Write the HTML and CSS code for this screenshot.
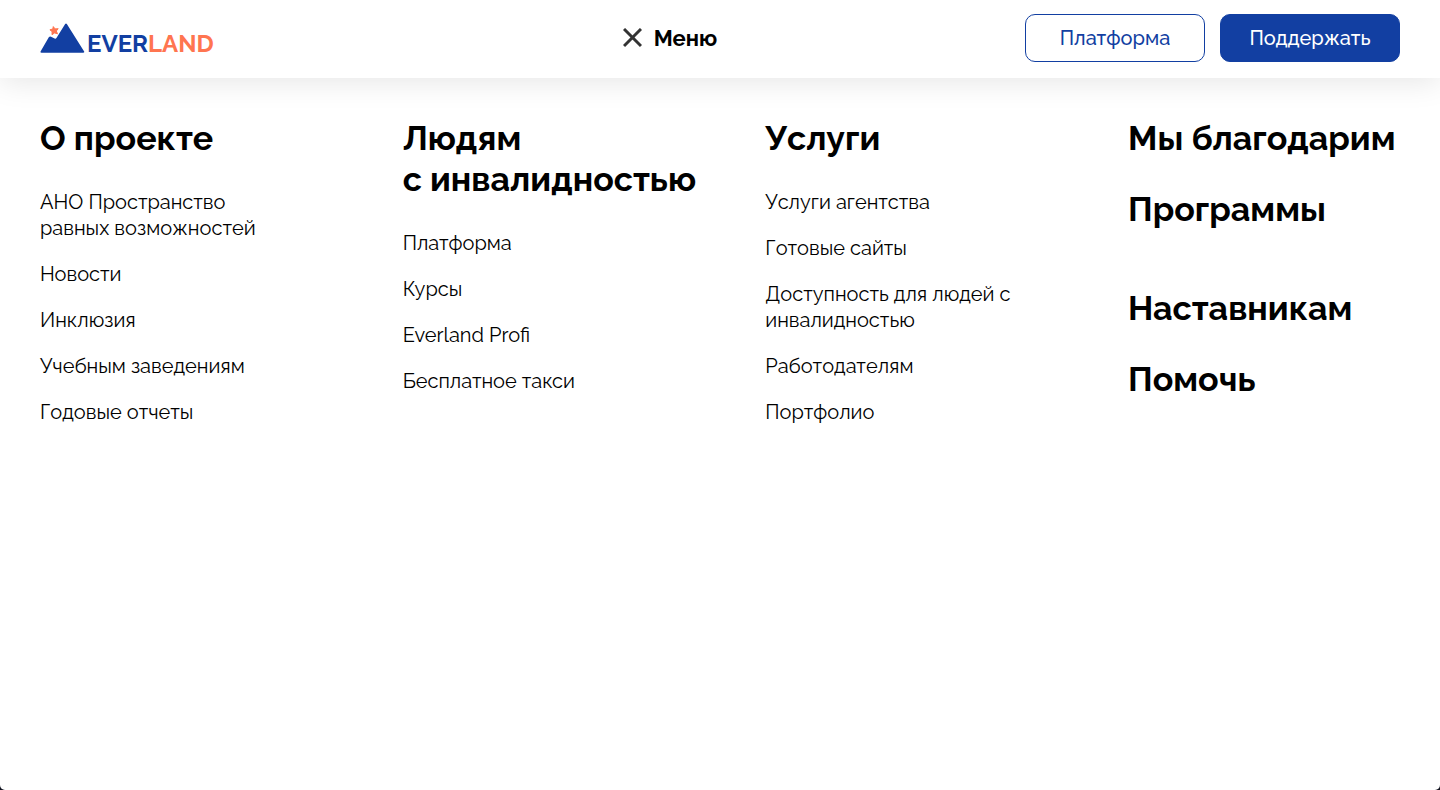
FILE: index.html
```html
<!DOCTYPE html>
<html lang="ru">
<head>
<meta charset="utf-8">
<meta name="viewport" content="width=device-width, initial-scale=1">
<title>Everland</title>
<link rel="stylesheet" href="styles.css">
</head>
<body>
<header class="header">
  <a class="logo" href="#">
    <svg class="logo-mark" width="45" height="30" viewBox="0 0 45 30" aria-hidden="true">
      <path fill="#123fa2" d="M.7 28.200 8.800 14.300q.9-1.200 2.200-.6l3.600 1.800q1.200.5 2-.7L25 1.200q1-1.500 2 0L44 28.200q.9 1.600-.9 1.600H1.500q-1.600 0-.8-1.600z"/>
      <path fill="#ff7550" stroke="#ff7550" stroke-width="1" stroke-linejoin="round" d="m13.300 3.600 1.700 2.300 3.200-.2-1.900 2.300 1.200 2.800-2.900-.9-2.600 1.800.1-3.100-2.200-1.800 2.900-.8z"/>
    </svg>
    <span class="logo-text"><span class="logo-ever">EVER</span><span class="logo-land">LAND</span></span>
  </a>
  <button class="menu-toggle" type="button" aria-expanded="true">
    <svg width="19" height="20" viewBox="0 0 19 20" aria-hidden="true"><path d="m1 1 17 17m0-17-17 17" stroke="#333" stroke-width="3" fill="none"/></svg>
    Меню
  </button>
  <div class="actions">
    <a class="button" href="#">Платформа</a>
    <a class="button button-primary" href="#">Поддержать</a>
  </div>
</header>
<nav class="menu" aria-label="Меню">
  <section class="column">
    <h2 class="title"><a href="#">О проекте</a></h2>
    <ul class="links">
      <li><a href="#">АНО Пространство<br>равных возможностей</a></li>
      <li><a href="#">Новости</a></li>
      <li><a href="#">Инклюзия</a></li>
      <li><a href="#">Учебным заведениям</a></li>
      <li><a href="#">Годовые отчеты</a></li>
    </ul>
  </section>
  <section class="column">
    <h2 class="title"><a href="#">Людям<br>с инвалидностью</a></h2>
    <ul class="links">
      <li><a href="#">Платформа</a></li>
      <li><a href="#">Курсы</a></li>
      <li><a href="#">Everland Profi</a></li>
      <li><a href="#">Бесплатное такси</a></li>
    </ul>
  </section>
  <section class="column">
    <h2 class="title"><a href="#">Услуги</a></h2>
    <ul class="links">
      <li><a href="#">Услуги агентства</a></li>
      <li><a href="#">Готовые сайты</a></li>
      <li><a href="#">Доступность для людей с<br>инвалидностью</a></li>
      <li><a href="#">Работодателям</a></li>
      <li><a href="#">Портфолио</a></li>
    </ul>
  </section>
  <section class="column">
    <h2 class="title"><a href="#">Мы благодарим</a></h2>
    <h2 class="title title-last"><a href="#">Программы</a></h2>
    <h2 class="title"><a href="#">Наставникам</a></h2>
    <h2 class="title"><a href="#">Помочь</a></h2>
  </section>
</nav>
</body>
</html>
```
FILE: styles.css
```css
* {
  box-sizing: border-box;
}

html {
  background: #11131f;
}

body {
  min-height: 100vh;
  margin: 0;
  border-radius: 0 0 5px 5px;
  background: #fff;
  color: #000;
  font-family: Raleway, Lato, "Open Sans", sans-serif;
  font-size: 20px;
  line-height: 26px;
}

a {
  color: inherit;
  text-decoration: none;
}

.header {
  display: grid;
  grid-template-columns: 1fr auto 1fr;
  align-items: center;
  padding: 14px 40px 16px;
  box-shadow: 0 4px 30px rgba(0, 0, 0, 0.1);
}

.logo {
  display: flex;
  align-items: flex-end;
  gap: 2px;
}

.logo-text {
  font-size: 24px;
  font-weight: 700;
  line-height: 18px;
}

.logo-ever {
  color: #123fa2;
}

.logo-land {
  color: #ff7550;
}

.menu-toggle {
  display: flex;
  align-items: center;
  gap: 12px;
  margin-right: 100px;
  padding: 0;
  border: 0;
  background: none;
  color: #000;
  font-family: inherit;
  font-size: 22px;
  font-weight: 700;
  line-height: 26px;
}

.actions {
  display: flex;
  justify-content: flex-end;
  gap: 15px;
}

.button {
  width: 180px;
  padding: 10px 0;
  border: 1px solid #123fa2;
  border-radius: 10px;
  color: #123fa2;
  font-weight: 500;
  text-align: center;
}

.button-primary {
  background: #123fa2;
  color: #fff;
}

.menu {
  display: flex;
  justify-content: space-between;
  padding: 40px;
}

.column {
  width: 20%;
}

.title {
  margin: 0 0 30px;
  font-size: 34px;
  font-weight: 700;
  line-height: 41px;
  white-space: nowrap;
}

.title-last {
  margin-bottom: 58px;
}

.links {
  display: grid;
  gap: 20px;
  margin: 0;
  padding: 0;
  list-style: none;
  white-space: nowrap;
}
```
